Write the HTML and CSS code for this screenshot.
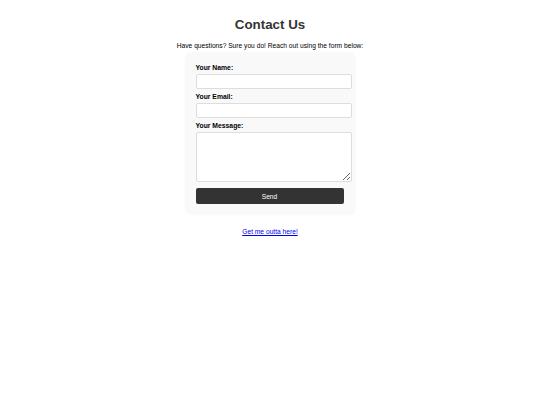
FILE: index.html
```html
<!DOCTYPE html>
<html>
<head>
<meta charset="utf-8">
<link rel="stylesheet" href="styles.css">
</head>
<body>
<h1 class="title">Contact Us</h1>
<p class="intro">Have questions? Sure you do! Reach out using the form below:</p>
<form class="card">
  <label class="label" for="name">Your Name:</label>
  <input class="field" id="name" type="text">
  <label class="label" for="email">Your Email:</label>
  <input class="field" id="email" type="email">
  <label class="label" for="msg">Your Message:</label>
  <textarea class="field area" id="msg"></textarea>
  <button class="send" type="button">Send</button>
</form>
<p class="back"><a href="#">Get me outta here!</a></p>
</body>
</html>
```

FILE: styles.css
```css
html, body {
  margin: 0;
  padding: 0;
  background: #fff;
}
body {
  font-family: "Liberation Sans", Arial, sans-serif;
  font-size: 6.67px;
  color: #000;
  padding-top: 16px;
}
.title {
  margin: 0;
  text-align: center;
  font-size: 13.33px;
  line-height: 17px;
  color: #333;
  font-weight: bold;
}
.intro {
  margin: 9px 0 0;
  text-align: center;
  line-height: 8px;
}
.card {
  box-sizing: border-box;
  width: 169px;
  margin: 3px auto 0;
  padding: 11px 10px 10px;
  background: #f9f9f9;
  border-radius: 5px;
  box-shadow: 0 0 3px rgba(0,0,0,0.06);
  display: flex;
  flex-direction: column;
  align-items: flex-start;
}
.label {
  display: block;
  font-weight: bold;
  font-size: 6.8px;
  line-height: 8px;
  margin-bottom: 2px;
  color: #000;
}
.field {
  box-sizing: border-box;
  width: 156px;
  height: 15px;
  margin: 0 0 4px;
  padding: 2px;
  border: 1px solid #ddd;
  border-radius: 2px;
  background: #fff;
  font-family: inherit;
  font-size: 6.67px;
}
.area {
  height: 50px;
  margin: 0 0 6px;
}
.send {
  width: 148px;
  height: 16px;
  border: none;
  border-radius: 2px;
  background: #333;
  color: #fff;
  font-family: inherit;
  font-size: 6.67px;
  padding: 0;
}
.back {
  margin: 14px 0 0;
  text-align: center;
  line-height: 8px;
}
.back a {
  color: #0000ee;
}
```
